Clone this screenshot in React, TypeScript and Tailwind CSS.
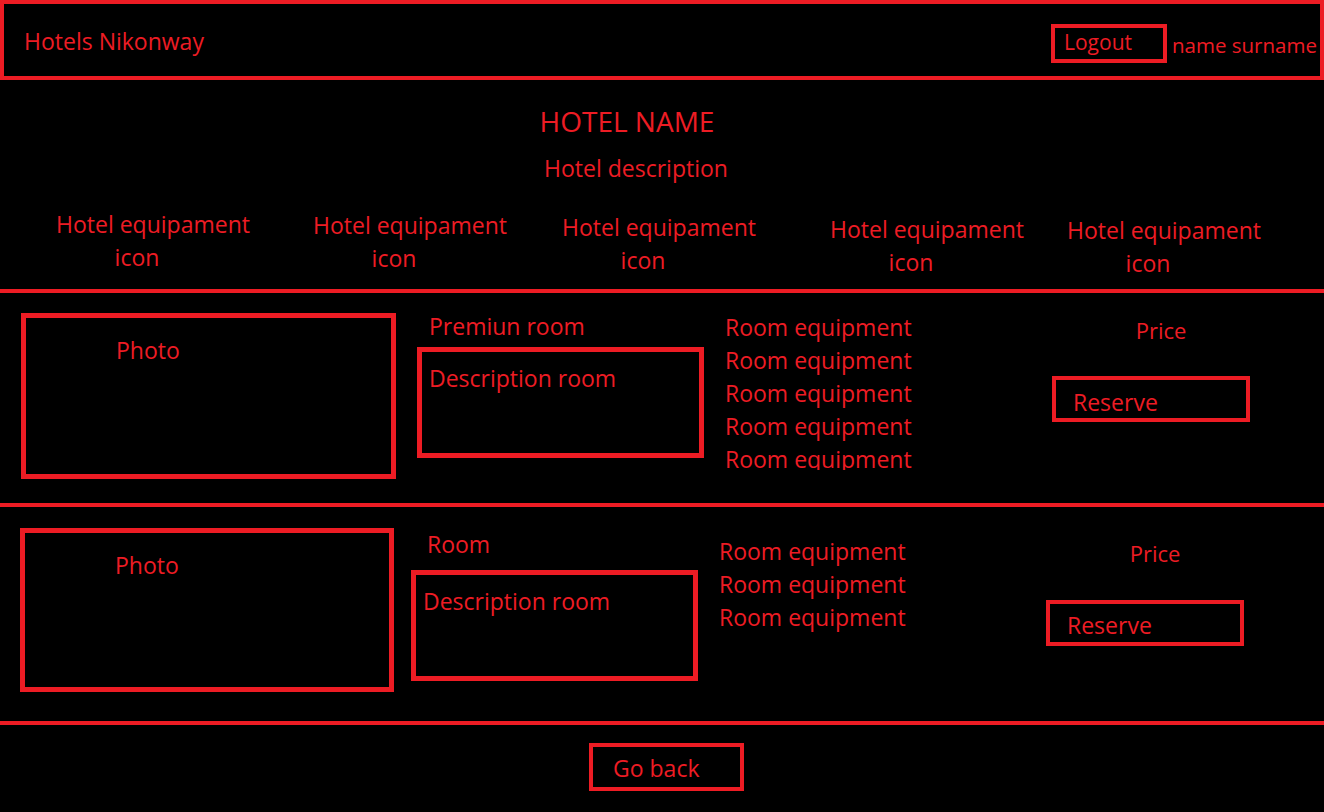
import React from "react";

type RoomProps = {
  title: string;
  equipment: string[];
  cls: {
    photo: string;
    photoText: string;
    col2: string;
    title: string;
    desc: string;
    equip: string;
    col4: string;
    price: string;
    reserve: string;
    reserveText: string;
  };
};

const Divider = () => <div className="h-[4px] w-full bg-[#ed1c24]" />;

const Room: React.FC<RoomProps> = ({ title, equipment, cls }) => (
  <div className="flex items-start">
    {/* Photo placeholder */}
    <div className={`border-[5px] border-[#ed1c24] ${cls.photo}`}>
      <p className={`pl-[90px] leading-[32px] text-[23px] ${cls.photoText}`}>Photo</p>
    </div>

    {/* Title + description */}
    <div className={`w-[287px] ${cls.col2}`}>
      <p className={`leading-[32px] text-[23px] ${cls.title}`}>{title}</p>
      <div className={`h-[111px] border-[5px] border-[#ed1c24] pl-[7px] pt-[10px] ${cls.desc}`}>
        <p className="leading-[32px] text-[23px] whitespace-nowrap">Description room</p>
      </div>
    </div>

    {/* Room equipment list */}
    <div className={`w-[200px] ml-[21px] overflow-hidden ${cls.equip}`}>
      {equipment.map((e, i) => (
        <p key={i} className="leading-[33px] text-[23px] whitespace-nowrap">
          {e}
        </p>
      ))}
    </div>

    {/* Price + reserve */}
    <div className={`w-[198px] ml-[127px] ${cls.col4}`}>
      <p className={`pl-[20px] text-center leading-[32px] text-[22px] ${cls.price}`}>Price</p>
      <div className={`h-[46px] border-4 border-[#ed1c24] pl-[17px] ${cls.reserve}`}>
        <p className={`leading-[32px] text-[23px] ${cls.reserveText}`}>Reserve</p>
      </div>
    </div>
  </div>
);

const hotelEquipment = [
  "ml-0 mt-0",
  "ml-[57px] mt-[1px]",
  "ml-[49px] mt-[3px]",
  "ml-[68px] mt-[5px]",
  "ml-[37px] mt-[6px]",
];

export default function App() {
  return (
    <div className="h-[812px] w-full overflow-hidden bg-black text-[#ed1c24] font-['Open_Sans',sans-serif]">
      {/* Top bar */}
      <header className="flex h-[80px] items-start border-4 border-[#ed1c24]">
        <p className="ml-[20px] mt-[21px] text-[23px] leading-[32px]">Hotels Nikonway</p>
        <div className="flex-1" />
        <div className="mt-[20px] h-[39px] w-[116px] border-4 border-[#ed1c24] pl-[9px]">
          <p className="text-[21px] leading-[28px]">Logout</p>
        </div>
        <p className="ml-[5px] mt-[27px] w-[148px] whitespace-nowrap text-[20.5px] leading-[28px]">
          name surname
        </p>
      </header>

      {/* Hotel info */}
      <section className="h-[209px] pt-[23px]">
        <h1 className="pr-[70px] text-center text-[28px] leading-[36px]">HOTEL NAME</h1>
        <p className="mt-[13px] pr-[52px] text-center text-[23px] leading-[32px]">Hotel description</p>
        <div className="mt-[24px] flex items-start pl-[53px]">
          {hotelEquipment.map((c, i) => (
            <div key={i} className={`flex w-[200px] flex-col items-center ${c}`}>
              <p className="whitespace-nowrap text-[23px] leading-[33px]">Hotel equipament</p>
              <p className="pr-[32px] text-[23px] leading-[33px]">icon</p>
            </div>
          ))}
        </div>
      </section>

      <Divider />

      <div className="h-[210px]">
        <Room
          title="Premiun room"
          equipment={["Room equipment", "Room equipment", "Room equipment", "Room equipment", "Room equipment"]}
          cls={{
            photo: "ml-[21px] mt-[20px] w-[375px] h-[166px]",
            photoText: "pt-[16px]",
            col2: "ml-[21px] mt-[17px]",
            title: "pl-[12px]",
            desc: "mt-[5px]",
            equip: "mt-[18px] h-[159px]",
            col4: "mt-[21px]",
            price: "",
            reserve: "mt-[30px]",
            reserveText: "pt-[6px]",
          }}
        />
      </div>

      <Divider />

      <div className="h-[214px]">
        <Room
          title="Room"
          equipment={["Room equipment", "Room equipment", "Room equipment"]}
          cls={{
            photo: "ml-[20px] mt-[21px] w-[374px] h-[164px]",
            photoText: "pt-[16px]",
            col2: "ml-[17px] mt-[21px]",
            title: "pl-[16px]",
            desc: "mt-[10px]",
            equip: "mt-[28px]",
            col4: "mt-[30px]",
            price: "",
            reserve: "mt-[31px]",
            reserveText: "pt-[5px]",
          }}
        />
      </div>

      <Divider />

      <footer>
        <div className="ml-[589px] mt-[18px] h-[48px] w-[155px] border-4 border-[#ed1c24] pl-[20px] pt-[7px]">
          <p className="text-[23px] leading-[28px]">Go back</p>
        </div>
      </footer>
    </div>
  );
}
